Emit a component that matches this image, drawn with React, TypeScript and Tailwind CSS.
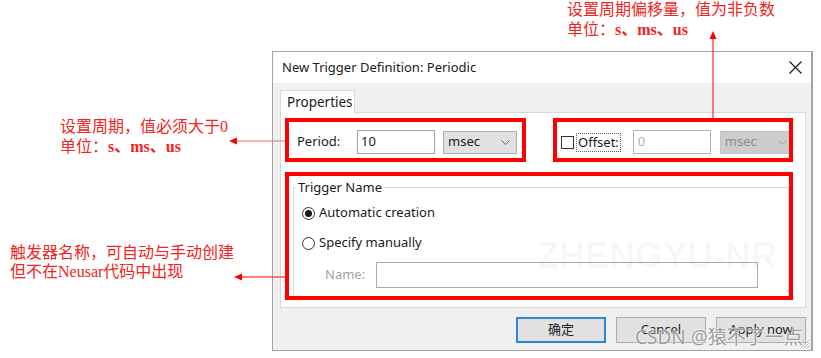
import React from 'react';

function ChevronDown({ className }: { className?: string }) {
  return (
    <svg width="9" height="5" viewBox="0 0 9 5" fill="none" stroke="currentColor" strokeWidth="1" className={className}>
      <path d="M0.5 0.5 L4.5 4.5 L8.5 0.5" />
    </svg>
  );
}

function CloseIcon() {
  return (
    <svg width="13" height="13" viewBox="0 0 13 13" fill="none" stroke="#1a1a1a" strokeWidth="1.2">
      <path d="M0.5 0.5 L12.5 12.5 M12.5 0.5 L0.5 12.5" />
    </svg>
  );
}

function Radio({ checked }: { checked?: boolean }) {
  return (
    <span className="w-[13px] h-[13px] rounded-full border border-[#333333] bg-white flex items-center justify-center shrink-0">
      {checked && <span className="w-[7px] h-[7px] rounded-full bg-[#1a1a1a]" />}
    </span>
  );
}

function Dialog() {
  return (
    <div className="relative w-[541px] h-[300px] border border-[#a3a3a3] border-r-2 bg-[#f0f0f0] flex flex-col font-['Noto_Sans','Noto_Sans_CJK_SC',sans-serif] text-[13px] text-[#1a1a1a]">
      {/* Title bar */}
      <div className="h-[31px] bg-white flex items-center justify-between pl-[9px] pr-[9px]">
        <span className="text-[13px]">New Trigger Definition: Periodic</span>
        <CloseIcon />
      </div>

      <div className="pl-[7px] pt-[7px]">
        {/* Tab */}
        <div className="relative z-10 -mb-px w-[75px] h-[23px] bg-white border border-b-0 border-[#d9d9d9] pl-[6px] leading-[22px] text-[13.5px]">
          Properties
        </div>

        {/* Tab panel */}
        <div className="w-[526px] h-[196px] bg-white border border-[#d9d9d9] pt-[5px] px-[4px]">
          <div className="flex gap-[27px]">
            {/* Period */}
            <div className="w-[241px] h-[44px] border-4 border-[#ff0000] flex items-center pl-[8px] pt-[4px]">
              <span className="w-[60px]">Period:</span>
              <div className="w-[78px] h-[24px] border border-[#a0a0a0] bg-white flex items-center pl-[3px]">10</div>
              <div className="ml-[8px] w-[74px] h-[23px] bg-[#e1e1e1] border border-[#adadad] flex items-center justify-between pl-[4px] pr-[6px]">
                <span>msec</span>
                <ChevronDown className="text-[#606060]" />
              </div>
            </div>

            {/* Offset */}
            <div className="w-[240px] h-[44px] border-4 border-[#ff0000] flex items-center pl-[4px] pt-[4px] overflow-hidden">
              <span className="w-[13px] h-[13px] border border-[#333333] bg-white shrink-0" />
              <span className="ml-[2px] border border-dotted border-[#606060] px-[1px] leading-[17px]">Offset:</span>
              <div className="ml-[12px] w-[78px] h-[24px] border border-[#b4b4b4] bg-white text-[#b0b0b0] flex items-center pl-[4px] shrink-0">0</div>
              <div className="ml-[9px] w-[74px] h-[23px] bg-[#cccccc] border border-[#c4c4c4] text-[#8e8e8e] flex items-center justify-between pl-[4px] pr-[6px] shrink-0">
                <span>msec</span>
                <ChevronDown className="text-[#a0a0a0]" />
              </div>
            </div>
          </div>

          {/* Trigger Name */}
          <div className="mt-[10px] w-[508px] h-[128px] border-4 border-[#ff0000] overflow-hidden pl-[4px] pt-[1px]">
            <fieldset className="border border-[#dcdcdc] h-[140px] p-0 m-0">
              <legend className="ml-[2px] px-[2px] leading-[20px]">Trigger Name</legend>
              <div className="pl-[8px]">
                <div className="mt-[6px] h-[20px] flex items-center">
                  <Radio checked />
                  <span className="ml-[4px]">Automatic creation</span>
                </div>
                <div className="mt-[10px] h-[20px] flex items-center">
                  <Radio />
                  <span className="ml-[4px]">Specify manually</span>
                </div>
                <div className="mt-[9px] h-[26px] flex items-center">
                  <span className="ml-[23px] w-[51px] text-[#a3a3a3]">Name:</span>
                  <div className="w-[382px] h-[26px] border border-[#adadad] bg-white" />
                </div>
              </div>
            </fieldset>
          </div>
        </div>

        {/* Buttons */}
        <div className="flex justify-end gap-[10px] pr-[5px] pt-[9px]">
          <div className="w-[90px] h-[26px] border-2 border-[#2f86d6] bg-[#e1e1e1] flex items-center justify-center">确定</div>
          <div className="w-[90px] h-[26px] border border-[#adadad] bg-[#e1e1e1] flex items-center justify-center">Cancel</div>
          <div className="w-[90px] h-[26px] border border-[#adadad] bg-[#e1e1e1] flex items-center justify-center">Apply now</div>
        </div>
      </div>

      {/* resize grip */}
      <svg className="absolute right-[1px] bottom-[1px]" width="11" height="11" viewBox="0 0 11 11" stroke="#b8b8b8" strokeWidth="1">
        <path d="M10 2 L2 10 M10 5 L5 10 M10 8 L8 10" />
      </svg>
    </div>
  );
}

export default function App() {
  return (
    <div className="relative w-[821px] h-[358px] overflow-hidden bg-white">
      <div className="pl-[272px] pt-[51px]">
        <Dialog />
      </div>

      {/* faint watermark */}
      <div className="absolute left-[537px] top-[236px] text-[36px] leading-[40px] font-bold text-black/[0.03] font-['Liberation_Sans',sans-serif] pointer-events-none">
        ZHENGYU-NR
      </div>

      {/* annotations */}
      <div className="absolute left-[567px] top-0 text-[16px] leading-[20px] text-[#f02424] font-['Liberation_Serif','Noto_Sans_CJK_SC',serif]">
        <p>设置周期偏移量，值为非负数</p>
        <p>
          单位：<span className="font-bold">s、ms、us</span>
        </p>
      </div>
      <div className="absolute left-[60px] top-[117px] text-[16px] leading-[20px] text-[#f02424] font-['Liberation_Serif','Noto_Sans_CJK_SC',serif]">
        <p>设置周期，值必须大于0</p>
        <p>
          单位：<span className="font-bold">s、ms、us</span>
        </p>
      </div>
      <div className="absolute left-[10px] top-[243px] text-[16px] leading-[19px] text-[#f02424] font-['Liberation_Serif','Noto_Sans_CJK_SC',serif]">
        <p>触发器名称，可自动与手动创建</p>
        <p>但不在Neusar代码中出现</p>
      </div>

      <svg className="absolute inset-0 pointer-events-none" width="821" height="358">
        <line x1="713" y1="118" x2="713" y2="38" stroke="#ff0000" strokeWidth="1" />
        <polygon points="713,31 709.5,39 716.5,39" fill="#ff0000" />
        <line x1="285" y1="141" x2="236" y2="141" stroke="#f06a6a" strokeWidth="1" />
        <polygon points="229,141 237,137.5 237,144.5" fill="#ff0000" />
        <line x1="286" y1="277" x2="241" y2="277" stroke="#ff0000" strokeWidth="1" />
        <polygon points="234,277 242,273.5 242,280.5" fill="#ff0000" />
      </svg>

      {/* CSDN watermark */}
      <div className="absolute left-[635px] top-[325px] text-[19px] leading-[24px] text-[#9c9c9c] font-['Noto_Sans','Noto_Sans_CJK_SC',sans-serif] [text-shadow:0_0_2px_#ffffff,0_0_2px_#ffffff] pointer-events-none whitespace-nowrap">
        CSDN @猿不了一点
      </div>
    </div>
  );
}
